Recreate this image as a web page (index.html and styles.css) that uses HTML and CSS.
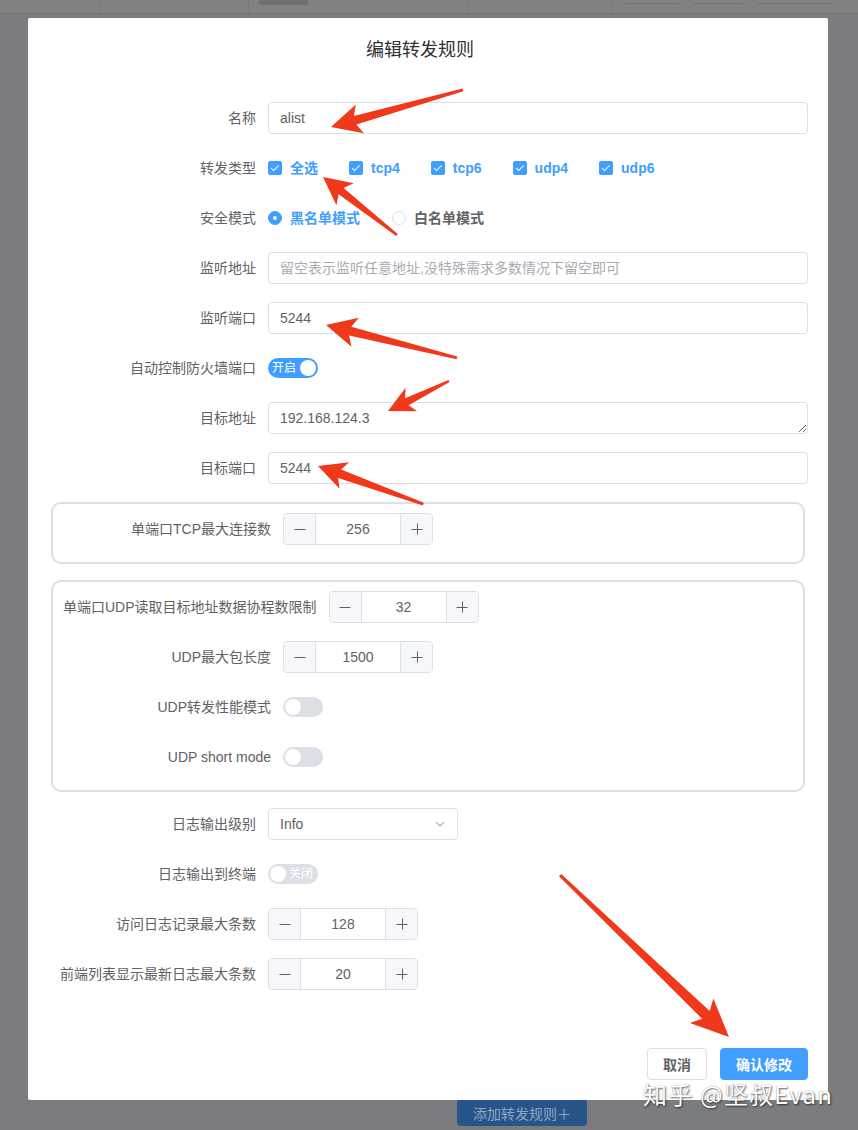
FILE: index.html
```html
<!DOCTYPE html>
<html lang="zh-CN">
<head>
<meta charset="utf-8">
<title>编辑转发规则</title>
<link rel="stylesheet" href="styles.css">
</head>
<body>
<div class="page">
  <div class="topbar">
    <div class="tb-seg seg1"></div>
    <div class="tb-seg seg2"></div>
    <div class="tb-seg seg3"><span class="tb-btn"></span></div>
    <div class="tb-seg seg4"></div>
    <div class="tb-seg seg5"><span class="tb-box b1"></span><span class="tb-box b2"></span><span class="tb-box b3"></span></div>
  </div>
  <div class="page-main"></div>
  <div class="page-bottom"><button class="add-btn">添加转发规则＋</button></div>
</div>

<div class="overlay">
  <div class="dialog">
    <div class="dialog-header"><span class="dialog-title">编辑转发规则</span></div>
    <div class="dialog-body">
      <form class="form">
        <div class="form-item">
          <label class="form-label">名称</label>
          <div class="form-content"><input class="input" value="alist"></div>
        </div>
        <div class="form-item">
          <label class="form-label">转发类型</label>
          <div class="form-content">
            <span class="checkbox checked"><span class="cb-box"></span><span class="cb-label">全选</span></span>
            <span class="checkbox checked"><span class="cb-box"></span><span class="cb-label">tcp4</span></span>
            <span class="checkbox checked"><span class="cb-box"></span><span class="cb-label">tcp6</span></span>
            <span class="checkbox checked"><span class="cb-box"></span><span class="cb-label">udp4</span></span>
            <span class="checkbox checked"><span class="cb-box"></span><span class="cb-label">udp6</span></span>
          </div>
        </div>
        <div class="form-item">
          <label class="form-label">安全模式</label>
          <div class="form-content">
            <span class="radio checked"><span class="radio-circle"></span><span class="radio-label">黑名单模式</span></span>
            <span class="radio"><span class="radio-circle"></span><span class="radio-label">白名单模式</span></span>
          </div>
        </div>
        <div class="form-item">
          <label class="form-label">监听地址</label>
          <div class="form-content"><input class="input" placeholder="留空表示监听任意地址,没特殊需求多数情况下留空即可"></div>
        </div>
        <div class="form-item">
          <label class="form-label">监听端口</label>
          <div class="form-content"><input class="input" value="5244"></div>
        </div>
        <div class="form-item">
          <label class="form-label">自动控制防火墙端口</label>
          <div class="form-content">
            <span class="switch wide on"><span class="switch-text">开启</span><span class="switch-knob"></span></span>
          </div>
        </div>
        <div class="form-item">
          <label class="form-label">目标地址</label>
          <div class="form-content"><textarea class="input textarea">192.168.124.3</textarea></div>
        </div>
        <div class="form-item">
          <label class="form-label">目标端口</label>
          <div class="form-content"><input class="input" value="5244"></div>
        </div>

        <div class="group">
          <div class="form-item">
            <label class="form-label">单端口TCP最大连接数</label>
            <div class="form-content">
              <div class="input-number">
                <span class="in-btn dec"><svg width="12" height="12" viewBox="0 0 12 12"><path d="M0.5 6.5h11" stroke="#606266" stroke-width="1"/></svg></span>
                <span class="in-value">256</span>
                <span class="in-btn inc"><svg width="12" height="12" viewBox="0 0 12 12"><path d="M0.5 6.5h11M6.5 0.5v11" stroke="#606266" stroke-width="1"/></svg></span>
              </div>
            </div>
          </div>
        </div>

        <div class="group">
          <div class="form-item">
            <label class="form-label">单端口UDP读取目标地址数据协程数限制</label>
            <div class="form-content">
              <div class="input-number">
                <span class="in-btn dec"><svg width="12" height="12" viewBox="0 0 12 12"><path d="M0.5 6.5h11" stroke="#606266" stroke-width="1"/></svg></span>
                <span class="in-value">32</span>
                <span class="in-btn inc"><svg width="12" height="12" viewBox="0 0 12 12"><path d="M0.5 6.5h11M6.5 0.5v11" stroke="#606266" stroke-width="1"/></svg></span>
              </div>
            </div>
          </div>
          <div class="form-item">
            <label class="form-label">UDP最大包长度</label>
            <div class="form-content">
              <div class="input-number">
                <span class="in-btn dec"><svg width="12" height="12" viewBox="0 0 12 12"><path d="M0.5 6.5h11" stroke="#606266" stroke-width="1"/></svg></span>
                <span class="in-value">1500</span>
                <span class="in-btn inc"><svg width="12" height="12" viewBox="0 0 12 12"><path d="M0.5 6.5h11M6.5 0.5v11" stroke="#606266" stroke-width="1"/></svg></span>
              </div>
            </div>
          </div>
          <div class="form-item">
            <label class="form-label">UDP转发性能模式</label>
            <div class="form-content"><span class="switch"><span class="switch-knob"></span></span></div>
          </div>
          <div class="form-item">
            <label class="form-label">UDP short mode</label>
            <div class="form-content"><span class="switch"><span class="switch-knob"></span></span></div>
          </div>
        </div>

        <div class="form-item">
          <label class="form-label">日志输出级别</label>
          <div class="form-content">
            <div class="select"><span class="select-value">Info</span>
              <svg width="12" height="12" viewBox="0 0 12 12"><path d="M2 4.2l4 3.8 4-3.8" fill="none" stroke="#a8abb2" stroke-width="1.1"/></svg>
            </div>
          </div>
        </div>
        <div class="form-item">
          <label class="form-label">日志输出到终端</label>
          <div class="form-content">
            <span class="switch wide"><span class="switch-knob"></span><span class="switch-text">关闭</span></span>
          </div>
        </div>
        <div class="form-item">
          <label class="form-label">访问日志记录最大条数</label>
          <div class="form-content">
            <div class="input-number">
              <span class="in-btn dec"><svg width="12" height="12" viewBox="0 0 12 12"><path d="M0.5 6.5h11" stroke="#606266" stroke-width="1"/></svg></span>
              <span class="in-value">128</span>
              <span class="in-btn inc"><svg width="12" height="12" viewBox="0 0 12 12"><path d="M0.5 6.5h11M6.5 0.5v11" stroke="#606266" stroke-width="1"/></svg></span>
            </div>
          </div>
        </div>
        <div class="form-item">
          <label class="form-label">前端列表显示最新日志最大条数</label>
          <div class="form-content">
            <div class="input-number">
              <span class="in-btn dec"><svg width="12" height="12" viewBox="0 0 12 12"><path d="M0.5 6.5h11" stroke="#606266" stroke-width="1"/></svg></span>
              <span class="in-value">20</span>
              <span class="in-btn inc"><svg width="12" height="12" viewBox="0 0 12 12"><path d="M0.5 6.5h11M6.5 0.5v11" stroke="#606266" stroke-width="1"/></svg></span>
            </div>
          </div>
        </div>
      </form>
    </div>
    <div class="dialog-footer">
      <button class="btn">取消</button>
      <button class="btn btn-primary">确认修改</button>
    </div>
  </div>
</div>

<svg class="annotations" width="858" height="1130" viewBox="0 0 858 1130">
  <g fill="#f0391b">
    <g transform="translate(331 127) rotate(-15.7)"><polygon points="0,0 30,-15 25,-4.5 137,-1.5 137,1.5 25,4.5 30,15"/></g>
    <g transform="translate(323 177) rotate(38.1)"><polygon points="0,0 28,-14 23,-4 94,-1.3 94,1.3 23,4 28,14"/></g>
    <g transform="translate(326 325) rotate(14.1)"><polygon points="0,0 30,-15 25,-4.5 135,-1.5 135,1.5 25,4.5 30,15"/></g>
    <g transform="translate(388 411) rotate(-26.2)"><polygon points="0,0 26,-13 21,-4 68,-1.2 68,1.2 21,4 26,13"/></g>
    <g transform="translate(318 466) rotate(19.9)"><polygon points="0,0 28,-14 23,-4.5 112,-1.4 112,1.4 23,4.5 28,14"/></g>
    <g transform="translate(729 1037) rotate(-136.2)"><polygon points="0,0 38,-17 32,-5.5 234,-1.6 234,1.6 32,5.5 38,17"/></g>
  </g>
</svg>
<div class="watermark">知乎 @坚叔Evan</div>
</body>
</html>
```

FILE: styles.css
```css
* { box-sizing: border-box; }
html, body { margin: 0; padding: 0; }
body {
  width: 858px;
  height: 1130px;
  overflow: hidden;
  position: relative;
  background: #7b7c7f;
  font-family: "Liberation Sans", "Noto Sans CJK SC", sans-serif;
  font-size: 14px;
  color: #606266;
}

/* background page (dimmed by modal overlay) */
.page { height: 1130px; display: flex; flex-direction: column; }
.topbar {
  height: 14px;
  background: #818182;
  border-bottom: 1px solid #717275;
  display: flex;
}
.tb-seg { border-right: 1px solid #7a7a7c; display: flex; align-items: flex-start; }
.seg1 { width: 101px; }
.seg2 { width: 148px; }
.seg3 { width: 219px; padding-left: 10px; }
.seg4 { width: 145px; }
.seg5 { flex: 1; border-right: 0; padding-left: 13px; gap: 15px; }
.tb-btn { width: 49px; height: 5px; background: #6f6f73; border-radius: 0 0 3px 3px; }
.tb-box { height: 4px; border-bottom: 1px solid #747579; }
.tb-box.b1 { width: 52px; }
.tb-box.b2 { width: 49px; }
.tb-box.b3 { width: 74px; }
.page-main { flex: 1; }
.page-bottom { height: 31px; padding-left: 457px; }
.add-btn {
  width: 130px;
  height: 27px;
  border: 0;
  border-radius: 4px;
  background: #27558a;
  color: #8fa7c5;
  font-family: inherit;
  font-size: 14px;
  padding: 0;
}

/* modal */
.overlay { position: absolute; left: 0; top: 0; width: 858px; height: 1130px; }
.dialog {
  margin: 18px 0 0 28px;
  width: 800px;
  background: #fff;
  border-radius: 2px;
}
.dialog-header { padding: 20px 36px 10px 20px; text-align: center; }
.dialog-title { font-size: 18px; line-height: 24px; color: #303133; }
.dialog-body { padding: 30px 20px; }
.dialog-footer { padding: 10px 20px 20px; display: flex; justify-content: flex-end; gap: 13px; }

/* form */
.form { margin: 0; }
.form-item { display: flex; align-items: center; min-height: 32px; margin-bottom: 18px; }
.form-label {
  flex: 0 0 auto;
  min-width: 220px;
  padding-right: 12px;
  text-align: right;
  line-height: 32px;
  white-space: nowrap;
  color: #606266;
}
.form-content { flex: 1; display: flex; align-items: center; min-height: 32px; }

.input {
  width: 100%;
  height: 32px;
  border: 1px solid #dcdfe6;
  border-radius: 4px;
  padding: 0 11px;
  font-family: inherit;
  font-size: 14px;
  color: #606266;
  background: #fff;
  outline: none;
}
.input::placeholder { color: #a8abb2; }
.textarea { display: block; padding: 5px 11px; line-height: 20px; resize: vertical; }

/* group boxes */
.group {
  margin: 0 3px 16px;
  border: 2px solid #dcdfe6;
  border-radius: 10px;
  padding: 9px 10px 0 10px;
}
.group .form-item:last-child { margin-bottom: 17px; }

/* checkbox */
.checkbox { display: inline-flex; align-items: center; margin-right: 31px; }
.cb-box {
  position: relative;
  width: 14px;
  height: 14px;
  border: 1px solid #dcdfe6;
  border-radius: 2px;
  background: #fff;
}
.checkbox.checked .cb-box { background: #409eff; border-color: #409eff; }
.checkbox.checked .cb-box::after {
  content: "";
  position: absolute;
  left: 4px;
  top: 1px;
  width: 3px;
  height: 7px;
  border: 1px solid #fff;
  border-left: 0;
  border-top: 0;
  transform: rotate(45deg);
}
.cb-label { padding-left: 8px; font-weight: 600; line-height: 20px; }
.checkbox.checked .cb-label { color: #409eff; }

/* radio */
.radio { display: inline-flex; align-items: center; margin-right: 32px; }
.radio-circle {
  position: relative;
  width: 14px;
  height: 14px;
  border: 1px solid #dcdfe6;
  border-radius: 50%;
  background: #fff;
}
.radio.checked .radio-circle { background: #409eff; border-color: #409eff; }
.radio.checked .radio-circle::after {
  content: "";
  position: absolute;
  left: 4px;
  top: 4px;
  width: 4px;
  height: 4px;
  border-radius: 50%;
  background: #fff;
}
.radio-label { padding-left: 8px; font-weight: 600; line-height: 20px; color: #606266; }
.radio.checked .radio-label { color: #409eff; }

/* switch */
.switch {
  display: inline-flex;
  align-items: center;
  width: 40px;
  height: 20px;
  padding: 0 2px;
  border-radius: 10px;
  background: #dcdfe6;
}
.switch.wide { width: 50px; justify-content: space-between; padding: 0 5px 0 2px; }
.switch.on { background: #409eff; padding: 0 2px 0 4px; }
.switch-knob { width: 16px; height: 16px; border-radius: 50%; background: #fff; }
.switch-text { font-size: 12px; line-height: 20px; color: #fff; }

/* input number */
.input-number {
  display: flex;
  width: 150px;
  height: 32px;
  border: 1px solid #dcdfe6;
  border-radius: 4px;
  overflow: hidden;
  background: #fff;
}
.in-btn { width: 32px; display: flex; align-items: center; justify-content: center; background: #f5f7fa; }
.in-btn.dec { border-right: 1px solid #dcdfe6; }
.in-btn.inc { border-left: 1px solid #dcdfe6; }
.in-value { flex: 1; text-align: center; line-height: 30px; color: #606266; }

/* select */
.select {
  width: 190px;
  height: 32px;
  border: 1px solid #dcdfe6;
  border-radius: 4px;
  padding: 0 11px;
  display: flex;
  align-items: center;
  justify-content: space-between;
}
.select-value { color: #606266; }

/* buttons */
.btn {
  height: 32px;
  padding: 0 15px;
  border: 1px solid #dcdfe6;
  border-radius: 4px;
  background: #fff;
  color: #606266;
  font-family: inherit;
  font-size: 14px;
  font-weight: 600;
}
.btn-primary { background: #409eff; border-color: #409eff; color: #fff; }

/* annotations over the screenshot */
.annotations { position: absolute; left: 0; top: 0; pointer-events: none; }
.watermark {
  position: absolute;
  left: 643px;
  top: 1078px;
  font-family: "Noto Sans CJK SC", "Liberation Sans", sans-serif;
  font-size: 24px;
  letter-spacing: 1.2px;
  line-height: 32px;
  color: #fff;
  white-space: nowrap;
  text-shadow: 1px 1px 2px rgba(0,0,0,0.6), 0 0 1px rgba(0,0,0,0.4);
}
```
